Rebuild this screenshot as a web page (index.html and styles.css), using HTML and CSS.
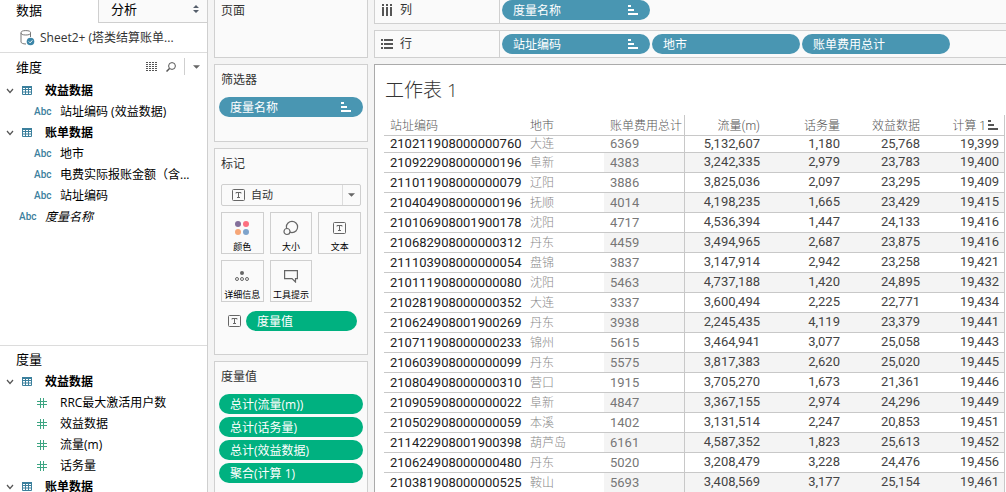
FILE: index.html
```html
<!DOCTYPE html>
<html lang="zh-CN">
<head>
	<meta charset="UTF-8">
	<title>工作表 1</title>
	<link rel="stylesheet" href="styles.css">
</head>
<body>
<!-- shared icons -->
<svg class="defs">
	<symbol id="i-table" viewBox="0 0 10 9">
		<path d="M.5.5h9v8h-9zM.5 3.5h9M.5 6h9M3.5 2v6.500M6.500 2v6.500" fill="none" stroke="#3c809d"/>
		<path d="M0 0h10v2H0z" fill="#3c809d"/>
	</symbol>
	<symbol id="i-open" viewBox="0 0 8 6">
		<path d="M1 1l3 3.500L7 1" fill="none" stroke="#555" stroke-width="1.200"/>
	</symbol>
	<symbol id="i-num" viewBox="0 0 10 10">
		<path d="M3.500 0v10M6.500 0v10M0 3.500h10M0 6.500h10" fill="none" stroke="#3da582"/>
	</symbol>
	<symbol id="i-sort" viewBox="0 0 11 10">
		<path d="M0 0h3v2H0zM0 4h6v2H0zM0 8h10v2H0z" fill="currentColor"/>
	</symbol>
	<symbol id="i-text" viewBox="0 0 13 12">
		<rect x=".5" y=".5" width="12" height="11" rx="1" fill="none" stroke="#666"/>
		<path d="M4 4.500V3.500h5v1M6.500 3.500v5M5 8.500h3" fill="none" stroke="#666"/>
	</symbol>
	<symbol id="i-down" viewBox="0 0 8 4">
		<path d="M0 0h8L4 4z" fill="#666"/>
	</symbol>
</svg>
<div id="wrap">
	<aside id="side">
		<div class="tabs">
			<button class="tab active">数据</button>
			<button class="tab">分析
				<svg width="6" height="8" viewBox="0 0 6 8"><path d="M0 3l3-3 3 3zM0 5h6L3 8z" fill="#555e6b"/></svg>
			</button>
		</div>
		<div class="source">
			<svg width="15" height="16" viewBox="0 0 15 16">
				<path d="M1 3v9c0 1 2 2 5 2M10.500 3v4" fill="none" stroke="#777"/>
				<ellipse cx="5.800" cy="2.800" rx="4.800" ry="2.200" fill="none" stroke="#777"/>
				<circle cx="10.500" cy="11.500" r="3.800" fill="#3c86a8"/>
				<path d="M8.800 11.500l1.300 1.300 2.200-2.400" fill="none" stroke="#fff"/>
			</svg>
			<span>Sheet2+ (塔类结算账单...</span>
		</div>
		<section class="pane dims">
			<div class="paneHead">
				<h3>维度</h3>
				<button class="tool" aria-label="查看数据">
					<svg width="12" height="9" viewBox="0 0 12 9"><path d="M0 .5h12M0 2.500h12M0 4.500h12M0 6.500h12M0 8.500h12" stroke="#555" stroke-dasharray="2 1"/></svg>
				</button>
				<button class="tool" aria-label="查找">
					<svg width="10" height="10" viewBox="0 0 10 10"><circle cx="6" cy="4" r="3.400" fill="none" stroke="#555"/><path d="M3.500 6.500L.5 9.500" stroke="#555" stroke-width="1.500"/></svg>
				</button>
				<button class="tool more" aria-label="菜单"><svg width="7" height="4"><use href="#i-down"/></svg></button>
			</div>
			<ul class="tree">
				<li class="group"><svg class="open"><use href="#i-open"/></svg><svg class="tbl"><use href="#i-table"/></svg>效益数据</li>
				<li class="field"><span class="abc">Abc</span>站址编码 (效益数据)</li>
				<li class="group"><svg class="open"><use href="#i-open"/></svg><svg class="tbl"><use href="#i-table"/></svg>账单数据</li>
				<li class="field"><span class="abc">Abc</span>地市</li>
				<li class="field"><span class="abc">Abc</span>电费实际报账金额（含...</li>
				<li class="field"><span class="abc">Abc</span>站址编码</li>
				<li class="field top"><span class="abc">Abc</span><em>度量名称</em></li>
			</ul>
		</section>
		<section class="pane">
			<div class="paneHead"><h3>度量</h3></div>
			<ul class="tree">
				<li class="group"><svg class="open"><use href="#i-open"/></svg><svg class="tbl"><use href="#i-table"/></svg>效益数据</li>
				<li class="field"><span class="abc"><svg class="num"><use href="#i-num"/></svg></span>RRC最大激活用户数</li>
				<li class="field"><span class="abc"><svg class="num"><use href="#i-num"/></svg></span>效益数据</li>
				<li class="field"><span class="abc"><svg class="num"><use href="#i-num"/></svg></span>流量(m)</li>
				<li class="field"><span class="abc"><svg class="num"><use href="#i-num"/></svg></span>话务量</li>
				<li class="group"><svg class="open"><use href="#i-open"/></svg><svg class="tbl"><use href="#i-table"/></svg>账单数据</li>
			</ul>
		</section>
	</aside>

	<div id="cards">
		<section class="card pages"><h4>页面</h4></section>
		<section class="card filters">
			<h4>筛选器</h4>
			<button class="pill">度量名称<svg class="sort"><use href="#i-sort"/></svg></button>
		</section>
		<section class="card marks">
			<h4><label for="markType">标记</label></h4>
			<div class="markType">
				<svg class="ico"><use href="#i-text"/></svg>
				<select id="markType"><option>自动</option></select>
				<svg class="arrow" width="7" height="4"><use href="#i-down"/></svg>
			</div>
			<div class="markBtns">
				<button>
					<svg width="16" height="16" viewBox="0 0 16 16"><circle cx="4" cy="4" r="3" fill="#84709b"/><circle cx="12" cy="4" r="3" fill="#fc7080"/><circle cx="4" cy="12" r="3" fill="#f6a677"/><circle cx="12" cy="12" r="3" fill="#7ea3cb"/></svg>
					<span>颜色</span>
				</button>
				<button>
					<svg width="16" height="16" viewBox="0 0 16 16" fill="#fafafa" stroke="#666" stroke-width="1.200"><circle cx="9" cy="7" r="5.600"/><circle cx="4" cy="11.500" r="3"/></svg>
					<span>大小</span>
				</button>
				<button>
					<svg class="ico"><use href="#i-text"/></svg>
					<span>文本</span>
				</button>
				<button>
					<svg width="16" height="12" viewBox="0 0 16 12"><circle cx="8" cy="3" r="2" fill="#666"/><g fill="none" stroke="#666"><circle cx="3" cy="9" r="1.500"/><circle cx="8" cy="9" r="1.500"/><circle cx="13" cy="9" r="1.500"/></g></svg>
					<span>详细信息</span>
				</button>
				<button>
					<svg width="14" height="13" viewBox="0 0 14 13"><path d="M.6.6h12.800v8H11.500V12L8 8.600H.6z" fill="none" stroke="#666" stroke-width="1.200"/></svg>
					<span>工具提示</span>
				</button>
			</div>
			<div class="markPill">
				<svg class="ico"><use href="#i-text"/></svg>
				<button class="pill green">度量值</button>
			</div>
		</section>
		<section class="card values">
			<h4>度量值</h4>
			<button class="pill green">总计(流量(m))</button>
			<button class="pill green">总计(话务量)</button>
			<button class="pill green">总计(效益数据)</button>
			<button class="pill green">聚合(计算 1)</button>
		</section>
	</div>

	<main id="main">
		<div class="shelf columns">
			<div class="shelfName">
				<svg width="12" height="12" viewBox="0 0 12 12"><path d="M2 0v2M6 0v2M10 0v2M2 3v9M6 3v9M10 3v9" stroke="#555" stroke-width="2"/></svg>列
			</div>
			<div class="pills">
				<button class="pill">度量名称<svg class="sort"><use href="#i-sort"/></svg></button>
			</div>
		</div>
		<div class="shelf">
			<div class="shelfName">
				<svg width="12" height="12" viewBox="0 0 12 12"><path d="M0 2h2M0 6h2M0 10h2M3 2h9M3 6h9M3 10h9" stroke="#555" stroke-width="2"/></svg>行
			</div>
			<div class="pills">
				<button class="pill">站址编码<svg class="sort"><use href="#i-sort"/></svg></button>
				<button class="pill">地市</button>
				<button class="pill">账单费用总计</button>
			</div>
		</div>
		<div class="sheet">
			<h1>工作表 1</h1>
			<table>
				<thead>
					<tr><th class="id">站址编码</th><th class="city">地市</th><th class="fee">账单费用总计</th><th>流量(m)</th><th>话务量</th><th>效益数据</th><th>计算 1<svg class="sort"><use href="#i-sort"/></svg></th></tr>
				</thead>
				<tbody>
					<tr><td>210211908000000760</td><td>大连</td><td>6369</td><td>5,132,607</td><td>1,180</td><td>25,768</td><td>19,399</td></tr>
					<tr><td>210922908000000196</td><td>阜新</td><td>4383</td><td>3,242,335</td><td>2,979</td><td>23,783</td><td>19,400</td></tr>
					<tr><td>211011908000000079</td><td>辽阳</td><td>3886</td><td>3,825,036</td><td>2,097</td><td>23,295</td><td>19,409</td></tr>
					<tr><td>210404908000000196</td><td>抚顺</td><td>4014</td><td>4,198,235</td><td>1,665</td><td>23,429</td><td>19,415</td></tr>
					<tr><td>210106908001900178</td><td>沈阳</td><td>4717</td><td>4,536,394</td><td>1,447</td><td>24,133</td><td>19,416</td></tr>
					<tr><td>210682908000000312</td><td>丹东</td><td>4459</td><td>3,494,965</td><td>2,687</td><td>23,875</td><td>19,416</td></tr>
					<tr><td>211103908000000054</td><td>盘锦</td><td>3837</td><td>3,147,914</td><td>2,942</td><td>23,258</td><td>19,421</td></tr>
					<tr><td>210111908000000080</td><td>沈阳</td><td>5463</td><td>4,737,188</td><td>1,420</td><td>24,895</td><td>19,432</td></tr>
					<tr><td>210281908000000352</td><td>大连</td><td>3337</td><td>3,600,494</td><td>2,225</td><td>22,771</td><td>19,434</td></tr>
					<tr><td>210624908001900269</td><td>丹东</td><td>3938</td><td>2,245,435</td><td>4,119</td><td>23,379</td><td>19,441</td></tr>
					<tr><td>210711908000000233</td><td>锦州</td><td>5615</td><td>3,464,941</td><td>3,077</td><td>25,058</td><td>19,443</td></tr>
					<tr><td>210603908000000099</td><td>丹东</td><td>5575</td><td>3,817,383</td><td>2,620</td><td>25,020</td><td>19,445</td></tr>
					<tr><td>210804908000000310</td><td>营口</td><td>1915</td><td>3,705,270</td><td>1,673</td><td>21,361</td><td>19,446</td></tr>
					<tr><td>210905908000000022</td><td>阜新</td><td>4847</td><td>3,367,155</td><td>2,974</td><td>24,296</td><td>19,449</td></tr>
					<tr><td>210502908000000059</td><td>本溪</td><td>1402</td><td>3,131,514</td><td>2,247</td><td>20,853</td><td>19,451</td></tr>
					<tr><td>211422908001900398</td><td>葫芦岛</td><td>6161</td><td>4,587,352</td><td>1,823</td><td>25,613</td><td>19,452</td></tr>
					<tr><td>210624908000000480</td><td>丹东</td><td>5020</td><td>3,208,479</td><td>3,228</td><td>24,476</td><td>19,456</td></tr>
					<tr><td>210381908000000525</td><td>鞍山</td><td>5693</td><td>3,408,569</td><td>3,177</td><td>25,154</td><td>19,461</td></tr>
				</tbody>
			</table>
		</div>
	</main>
</div>
</body>
</html>
```

FILE: styles.css
```css
* {
	box-sizing: border-box;
}
body {
	margin: 0;
	background: #f4f4f4;
	color: #000;
	font: 12px/20px "Open Sans", "Noto Sans CJK SC", sans-serif;
}
ul {
	margin: 0;
	padding: 0;
	list-style: none;
}
h1, h3, h4 {
	margin: 0;
	font-weight: normal;
}
button, select {
	margin: 0;
	padding: 0;
	border: none;
	background: none;
	color: inherit;
	font: inherit;
}
svg {
	display: block;
	flex: none;
}
.defs {
	position: absolute;
	width: 0;
	height: 0;
}
#wrap {
	display: flex;
	height: 100vh;
	overflow: hidden;
}

/* data pane */
#side {
	display: flex;
	flex-direction: column;
	flex: none;
	width: 208px;
	border-right: 1px solid #cfcfcf;
	background: #fff;
}
.tabs {
	display: flex;
	flex: none;
	height: 23px;
}
.tab {
	display: flex;
	align-items: center;
	justify-content: space-between;
	flex: 1;
	padding: 0 8px 4px 12px;
	border-bottom: 1px solid #cfcfcf;
	border-left: 1px solid #cfcfcf;
	background: #fafafa;
	font-size: 13px;
}
.tab.active {
	flex: 0 0 98px;
	padding-left: 16px;
	border: none;
	background: #fff;
}
.source {
	display: flex;
	align-items: center;
	flex: none;
	gap: 5px;
	height: 29px;
	padding-left: 20px;
	color: #333;
	white-space: nowrap;
}
.pane {
	flex: 1;
	min-height: 0;
	border-top: 1px solid #dcdcdc;
	overflow: hidden;
}
.pane.dims {
	flex: 2;
}
.paneHead {
	display: flex;
	align-items: center;
	height: 25px;
	padding-left: 16px;
}
.dims .paneHead {
	height: 27px;
}
.paneHead h3 {
	flex: 1;
	font-size: 13px;
}
.tool {
	padding-right: 8px;
}
.more {
	height: 17px;
	padding: 0 7px 0 8px;
	border-left: 1px solid #cfcfcf;
}
.tree li {
	display: flex;
	align-items: center;
	height: 21px;
	white-space: nowrap;
}
.group {
	padding-left: 6px;
	font-weight: bold;
}
.open {
	width: 8px;
	height: 6px;
	margin-right: 8px;
}
.tbl {
	width: 10px;
	height: 9px;
	margin-right: 13px;
}
.field {
	padding-left: 34px;
}
.field.top {
	padding-left: 19px;
}
.abc {
	flex: none;
	width: 26px;
	color: #3c809d;
	font-size: 10px;
	font-weight: 500;
	font-family: Roboto, sans-serif;
}
.num {
	width: 10px;
	height: 10px;
	margin-left: 3px;
}

/* cards */
#cards {
	display: flex;
	flex-direction: column;
	flex: none;
	gap: 6px;
	width: 154px;
	margin: 0 6px;
}
.card {
	padding: 5px 4px 4px;
	border: 1px solid #d0d0d0;
	background: #fafafa;
	color: #333;
}
.card h4 {
	padding: 0 2px;
	margin-bottom: 7px;
}
.card.pages {
	height: 58px;
	padding-top: 1px;
	border-top: none;
}
.filters {
	height: 78px;
}
.marks {
	height: 207px;
}
.marks h4 {
	margin-bottom: 10px;
}
.values {
	flex: 1;
	border-bottom: none;
}
.pill {
	display: flex;
	align-items: center;
	justify-content: space-between;
	width: 100%;
	height: 20px;
	padding: 2px 11px 0;
	border-radius: 10px;
	background: #4996b2;
	color: #fff;
	line-height: 18px;
	white-space: nowrap;
}
.pill .sort {
	margin-bottom: 2px;
}
.pill.green {
	background: #00b180;
}
.values .pill {
	margin-bottom: 3px;
}
.sort {
	width: 11px;
	height: 10px;
}
.ico {
	width: 13px;
	height: 12px;
}
.markType {
	position: relative;
	margin: 0 2px 6px;
}
.markType select {
	display: block;
	width: 100%;
	height: 22px;
	padding-left: 29px;
	border: 1px solid #cfcfcf;
	border-radius: 2px;
	appearance: none;
	font-size: 11px;
}
.markType .ico {
	position: absolute;
	top: 5px;
	left: 11px;
}
.markType .arrow {
	position: absolute;
	top: 9px;
	right: 6px;
}
.markType::after {
	content: "";
	position: absolute;
	top: 1px;
	right: 18px;
	bottom: 1px;
	border-left: 1px solid #dcdcdc;
}
.markBtns {
	display: grid;
	grid-template-columns: repeat(3, 1fr);
	gap: 6px;
	margin: 0 2px 9px;
}
.markBtns button {
	display: flex;
	flex-direction: column;
	align-items: center;
	height: 42px;
	padding-top: 2px;
	border: 1px solid #cfcfcf;
	color: #000;
	font-size: 9px;
	line-height: 12px;
	white-space: nowrap;
}
.markBtns svg {
	margin: auto 0;
}
.markPill {
	display: flex;
	align-items: center;
	gap: 5px;
	padding: 0 6px 0 9px;
}

/* shelves and sheet */
#main {
	display: flex;
	flex-direction: column;
	flex: 1;
	min-width: 0;
}
.shelf {
	display: flex;
	align-items: center;
	flex: none;
	height: 28px;
	margin-bottom: 6px;
	border: 1px solid #d0d0d0;
	border-right: none;
	background: #fafafa;
}
.shelf.columns {
	height: 24px;
	border-top: none;
	padding-bottom: 3px;
}
.shelfName {
	display: flex;
	align-items: center;
	gap: 7px;
	width: 125px;
	height: 26px;
	padding-left: 6px;
	border-right: 1px solid #d0d0d0;
	color: #333;
	font-size: 12px;
}
.pills {
	display: flex;
	gap: 2px;
	padding-left: 2px;
}
.pills .pill {
	width: 148px;
}
.sheet {
	flex: 1;
	min-height: 0;
	padding: 10px 1px 0 9px;
	border: 1px solid #aaa;
	border-width: 1px 0 0 1px;
	background: #fff;
	overflow: hidden;
}
.sheet h1 {
	margin-bottom: 10px;
	padding-left: 1px;
	color: #333;
	font: 300 19px/30px "Open Sans", "Noto Sans CJK SC", sans-serif;
}
table {
	width: 100%;
	table-layout: fixed;
	border-collapse: separate;
	border-spacing: 0;
	color: #444;
	font: 13px/18px Roboto, "Noto Sans CJK SC", sans-serif;
}
th, td {
	height: 20px;
	padding: 0 5px 1px 0;
	border-bottom: 1px solid #c8c8c8;
	text-align: right;
	white-space: nowrap;
}
th {
	height: 21px;
	color: #555;
	font-weight: 300;
	font-size: 12px;
}
.id {
	width: 140px;
}
.city {
	width: 80px;
}
.fee {
	width: 81px;
}
th:nth-child(-n+3), td:nth-child(-n+3) {
	padding: 0 0 0 6px;
	text-align: left;
}
tr th:nth-child(n) {
	padding-top: 2px;
	padding-bottom: 0;
}
th:nth-child(3), td:nth-child(3), th:last-child, td:last-child {
	border-right: 1px solid #c8c8c8;
}
td:first-child {
	color: #222;
}
td:nth-child(2) {
	color: #888;
	font-weight: 300;
	font-size: 12px;
}
td:nth-child(3) {
	color: #777;
}
tbody tr:nth-child(even) td:nth-child(n+3) {
	background: #f4f4f4;
}
/* first row is partly scrolled under the header */
tbody tr:first-child td {
	height: 17px;
	line-height: 14px;
}
th .sort {
	display: inline-block;
	margin-left: 2px;
	color: #555;
}
```
